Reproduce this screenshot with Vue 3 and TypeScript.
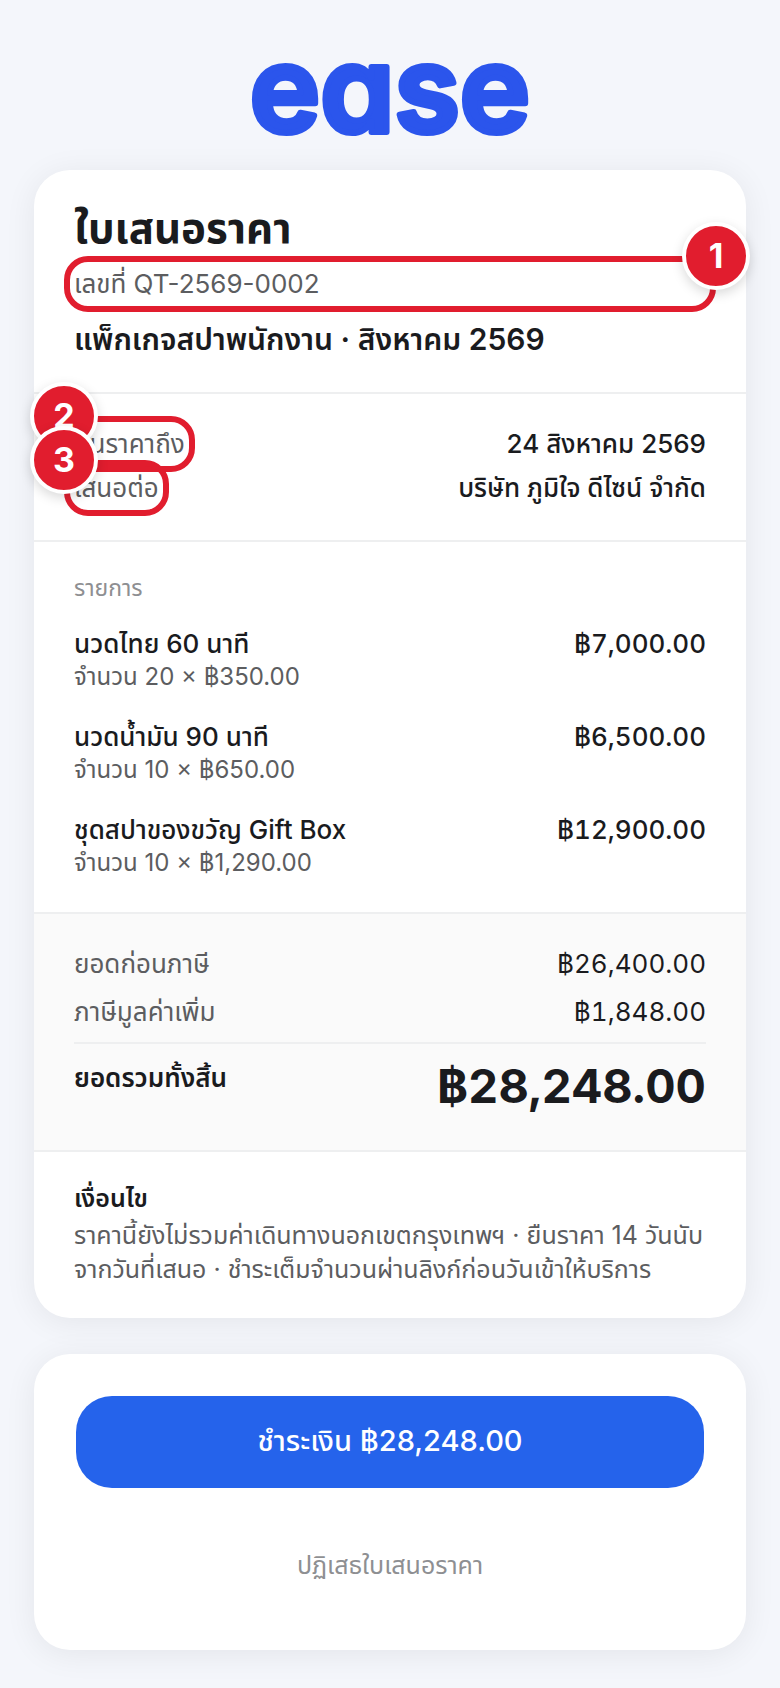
<script setup lang="ts">
interface Item {
  name: string
  detail: string
  amount: string
}

const items: Item[] = [
  { name: 'นวดไทย 60 นาที', detail: 'จำนวน 20 × ฿350.00', amount: '฿7,000.00' },
  { name: 'นวดน้ำมัน 90 นาที', detail: 'จำนวน 10 × ฿650.00', amount: '฿6,500.00' },
  { name: 'ชุดสปาของขวัญ Gift Box', detail: 'จำนวน 10 × ฿1,290.00', amount: '฿12,900.00' },
]

const subtotals = [
  { label: 'ยอดก่อนภาษี', value: '฿26,400.00' },
  { label: 'ภาษีมูลค่าเพิ่ม', value: '฿1,848.00' },
]

const total = '฿28,248.00'
</script>

<template>
  <main class="page">
    <header class="brand">
      <svg class="logo" viewBox="0 0 320 154" role="img" aria-label="ease">
        <text x="160" y="116" text-anchor="middle">ease</text>
      </svg>
    </header>

    <article class="card">
      <section class="heading">
        <h1>ใบเสนอราคา</h1>
        <p class="number marked">
          เลขที่ QT-2569-0002
          <span class="badge badge-right">1</span>
        </p>
        <h2>แพ็กเกจสปาพนักงาน · สิงหาคม 2569</h2>
      </section>

      <dl class="section meta">
        <div class="row">
          <dt class="marked">ยืนราคาถึง<span class="badge">2</span></dt>
          <dd>24 สิงหาคม 2569</dd>
        </div>
        <div class="row">
          <dt class="marked">เสนอต่อ<span class="badge">3</span></dt>
          <dd>บริษัท ภูมิใจ ดีไซน์ จำกัด</dd>
        </div>
      </dl>

      <section class="section lines">
        <h3>รายการ</h3>
        <ul>
          <li v-for="item in items" :key="item.name" class="row">
            <div>
              <p class="name">{{ item.name }}</p>
              <p class="detail">{{ item.detail }}</p>
            </div>
            <span class="name amount">{{ item.amount }}</span>
          </li>
        </ul>
      </section>

      <dl class="section totals">
        <div v-for="line in subtotals" :key="line.label" class="row">
          <dt>{{ line.label }}</dt>
          <dd class="amount">{{ line.value }}</dd>
        </div>
        <div class="row grand">
          <dt>ยอดรวมทั้งสิ้น</dt>
          <dd class="amount">{{ total }}</dd>
        </div>
      </dl>

      <section class="section terms">
        <h3>เงื่อนไข</h3>
        <p>
          ราคานี้ยังไม่รวมค่าเดินทางนอกเขตกรุงเทพฯ · ยืนราคา 14 วันนับจากวันที่เสนอ · ชำระเต็มจำนวนผ่านลิงก์ก่อนวันเข้าให้บริการ
        </p>
      </section>
    </article>

    <section class="card actions">
      <button type="button" class="pay">ชำระเงิน {{ total }}</button>
      <button type="button" class="decline">ปฏิเสธใบเสนอราคา</button>
    </section>
  </main>
</template>

<style>
body {
  background: #f4f6fb;
}
</style>

<style scoped>
.page {
  box-sizing: border-box;
  min-height: 100vh;
  padding: 16px 34px 38px;
  background: #f4f6fb;
  color: #1a1b1e;
  font-family: Inter, 'Noto Sans Thai', sans-serif;
  font-size: 26px;
  line-height: 36px;
}

h1,
h2,
h3,
p,
ul,
dl,
dd {
  margin: 0;
  padding: 0;
}

ul {
  list-style: none;
}

.brand {
  display: flex;
  justify-content: center;
}

.logo {
  width: 320px;
  height: 154px;
  overflow: visible;
  fill: #2b55ec;
  stroke: #2b55ec;
  stroke-width: 6px;
  stroke-linejoin: round;
  font-size: 119px;
  font-weight: 600;
  font-feature-settings: 'cv11';
}

.card {
  border-radius: 36px;
  background: #fff;
  box-shadow: 0 4px 32px rgba(0, 0, 0, 0.07);
}

.heading {
  padding: 28px 40px 32px;
}

h1 {
  font-size: 42px;
  font-weight: 700;
  line-height: 60px;
}

.number {
  margin: 8px 0 16px;
  color: #5c5d60;
}

h2 {
  font-size: 30px;
  font-weight: 600;
  line-height: 42px;
}

.section {
  padding: 32px 40px;
  border-top: 2px solid #eeeff0;
}

.row {
  display: flex;
  justify-content: space-between;
}

.marked {
  position: relative;
}

.marked::after {
  content: '';
  position: absolute;
  inset: -10px;
  border: 6px solid #e11d2e;
  border-radius: 24px;
}

.badge {
  position: absolute;
  z-index: 1;
  top: -44px;
  left: -44px;
  width: 60px;
  height: 60px;
  border: 4px solid #fff;
  border-radius: 50%;
  background: #e11d2e;
  box-shadow: 0 4px 12px rgba(0, 0, 0, 0.15);
  color: #fff;
  font-size: 34px;
  font-weight: 700;
  line-height: 60px;
  text-align: center;
}

.badge-right {
  right: -44px;
  left: auto;
}

.meta {
  display: grid;
  gap: 8px;
  padding-bottom: 34px;
}

.meta dt,
.totals dt {
  color: #5c5d60;
}

.meta dd,
.name {
  font-weight: 500;
}

.amount {
  font-variant-numeric: tabular-nums;
}

.lines {
  padding: 30px 40px 34px;
}

.lines h3 {
  margin-bottom: 22px;
  color: #8e8f92;
  font-size: 23px;
  font-weight: 400;
  line-height: 32px;
}

.lines ul {
  display: grid;
  gap: 27px;
}

.detail {
  color: #5c5d60;
  font-size: 24px;
  line-height: 30px;
}

.totals {
  display: grid;
  gap: 12px;
  padding-bottom: 34px;
  background: #fafafa;
}

.totals .grand {
  padding-top: 12px;
  border-top: 2px solid #eeeff0;
}

.grand dt {
  color: #1a1b1e;
  font-weight: 600;
  line-height: 44px;
}

.grand dd {
  font-size: 47px;
  font-weight: 700;
  line-height: 60px;
}

.terms {
  padding-top: 28px;
}

.terms h3 {
  margin-bottom: 2px;
  font-size: 25px;
  font-weight: 600;
}

.terms p {
  color: #5c5d60;
  font-size: 25px;
  line-height: 34px;
}

.actions {
  display: grid;
  gap: 36px;
  margin-top: 36px;
  padding: 42px;
}

button {
  border: 0;
  border-radius: 36px;
  background: none;
  font-family: inherit;
  cursor: pointer;
}

.pay {
  height: 92px;
  background: #2563eb;
  color: #fff;
  font-size: 29px;
  font-weight: 500;
}

.decline {
  height: 84px;
  color: #8e8f92;
  font-size: 25px;
}
</style>
